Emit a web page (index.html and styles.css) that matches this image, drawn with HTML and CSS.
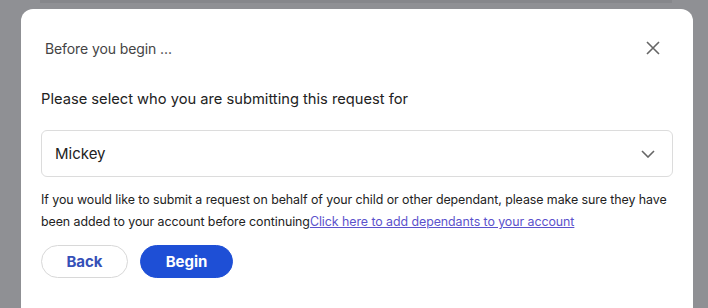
FILE: index.html
```html
<!DOCTYPE html>
<html>
<head>
<meta charset="utf-8">
<link rel="stylesheet" href="styles.css">
</head>
<body>
<div class="backdrop">
  <div class="band"></div>
  <div class="modal">
    <div class="header">
      <span class="title">Before you begin ...</span>
      <button class="close" aria-label="Close">
        <svg width="14" height="14" viewBox="0 0 14 14"><path d="M1 1 L13 13 M13 1 L1 13" stroke="#666" stroke-width="1.6" fill="none"/></svg>
      </button>
    </div>
    <div class="body">
      <p class="label">Please select who you are submitting this request for</p>
      <div class="select">
        <span>Mickey</span>
        <svg width="14" height="8" viewBox="0 0 14 8"><path d="M1 1 L7 7 L13 1" stroke="#666" stroke-width="1.6" fill="none"/></svg>
      </div>
      <p class="help">If you would like to submit a request on behalf of your child or other dependant, please make sure they have been added to your account before continuing<a href="#">Click here to add dependants to your account</a></p>
      <div class="actions">
        <button class="btn btn-back">Back</button>
        <button class="btn btn-begin">Begin</button>
      </div>
    </div>
  </div>
</div>
</body>
</html>
```
FILE: styles.css
```css
* { box-sizing: border-box; }
html, body { margin: 0; padding: 0; }
body {
  width: 708px;
  height: 308px;
  overflow: hidden;
  background: #8f9094;
  font-family: Inter, "Open Sans", sans-serif;
}
.backdrop {
  position: relative;
  height: 308px;
  overflow: hidden;
  padding: 9px 15px 0 21px;
}
.band {
  position: absolute;
  left: 40px;
  top: 0;
  width: 632px;
  height: 3px;
  background: #86878b;
}
.modal {
  position: relative;
  background: #fff;
  border-radius: 12px 12px 0 0;
  height: 299px;
  padding: 0 20px;
}
.header {
  display: flex;
  align-items: center;
  justify-content: space-between;
  height: 78px;
  padding: 0 13px 0 4px;
}
.title {
  font-size: 14px;
  color: #444;
  letter-spacing: -0.1px;
}
.close {
  border: 0;
  background: none;
  padding: 0;
  width: 14px;
  height: 14px;
  display: flex;
}
.label {
  margin: 1px 0 20px 0;
  font-size: 14.7px;
  line-height: 22px;
  color: #222;
}
.select {
  height: 47px;
  border: 1px solid #dcdcdc;
  border-radius: 6px;
  display: flex;
  align-items: center;
  justify-content: space-between;
  padding: 0 17px 0 13px;
  font-size: 15px;
  color: #222;
}
.help {
  margin: 12px -6px 0 0;
  font-size: 12.4px;
  letter-spacing: -0.06px;
  line-height: 22px;
  color: #222;
}
.help a {
  color: #5b52cc;
  text-decoration: underline;
}
.actions {
  display: flex;
  gap: 12px;
  margin-top: 12px;
}
.btn {
  height: 33px;
  border-radius: 17px;
  font-family: Inter, sans-serif;
  font-size: 15px;
  font-weight: 700;
  cursor: pointer;
}
.btn-back {
  width: 87px;
  background: #fff;
  border: 1px solid #d8d8d8;
  color: #3550b8;
}
.btn-begin {
  width: 93px;
  background: #1e4fd6;
  border: 1px solid #1e4fd6;
  color: #fff;
}
```
